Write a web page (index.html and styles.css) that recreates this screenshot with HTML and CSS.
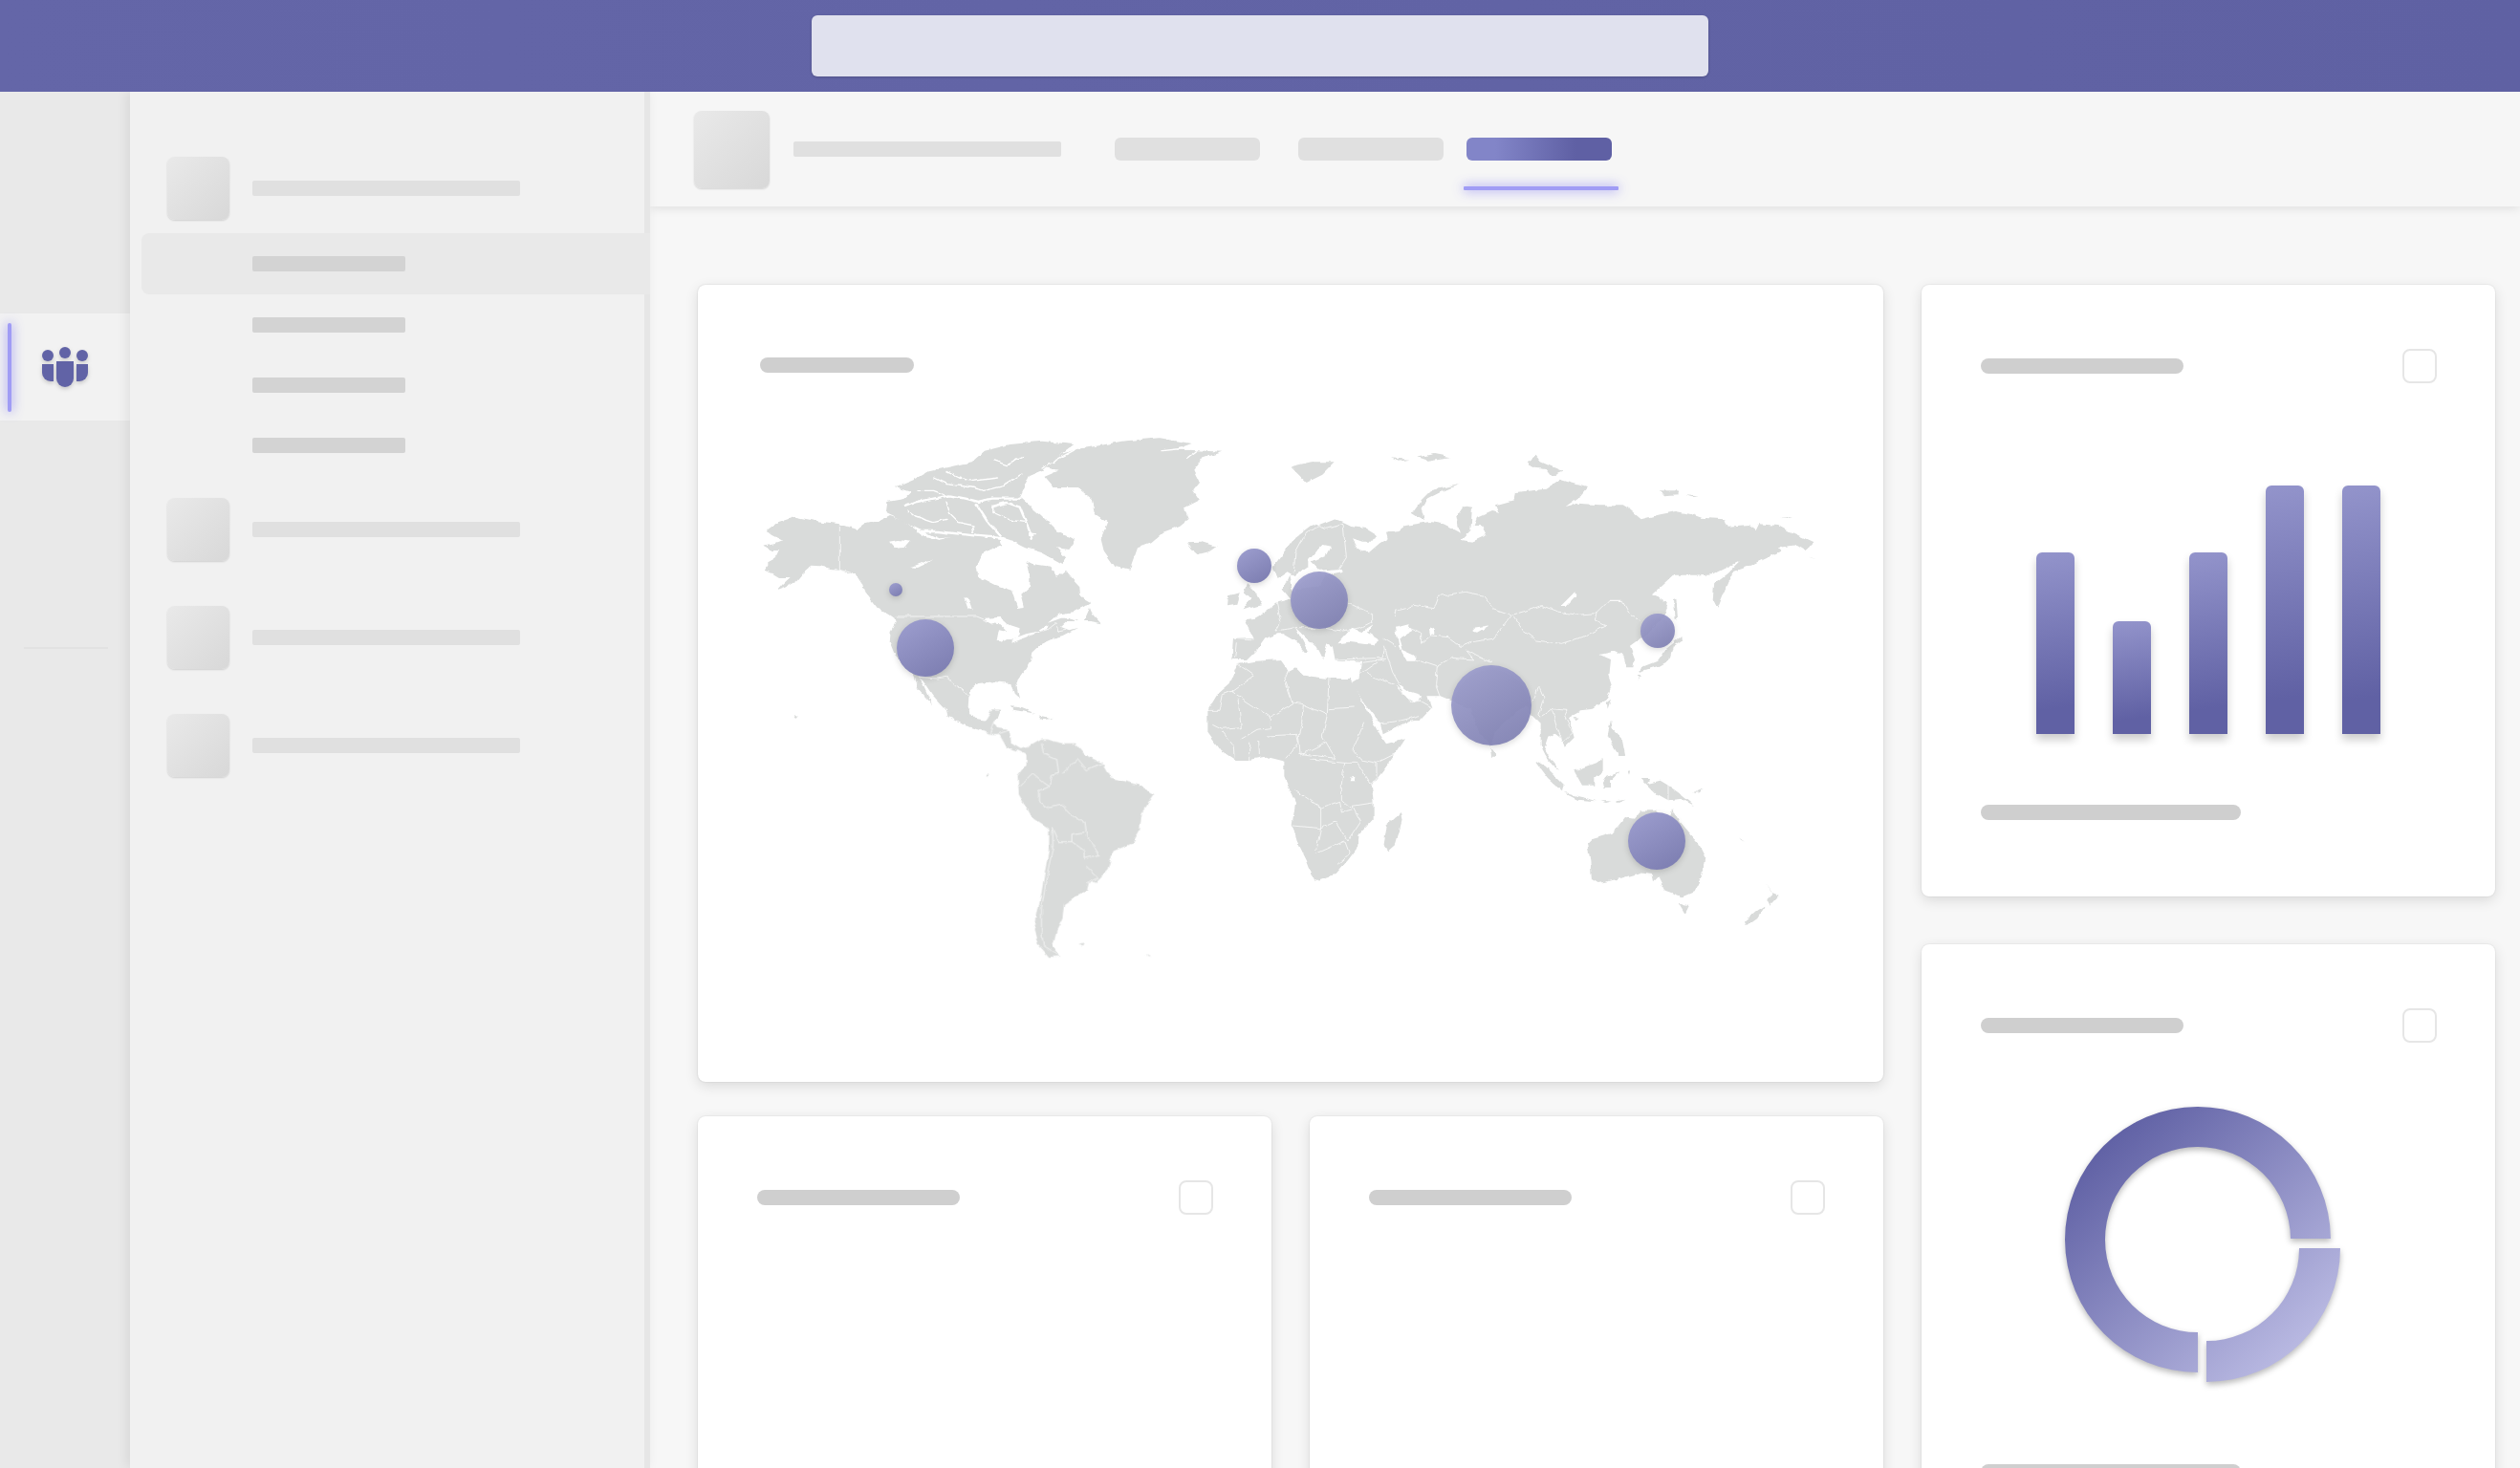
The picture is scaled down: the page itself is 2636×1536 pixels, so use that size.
FILE: index.html
```html
<!DOCTYPE html>
<html lang="en">
<head>
<meta charset="utf-8">
<title>Dashboard</title>
<link rel="stylesheet" href="styles.css">
</head>
<body>
<header class="topbar"><div class="search"></div></header>
<div class="shell">
  <nav class="rail">
    <div class="rail-item">
      <span class="rail-mark"></span>
      <svg class="rail-icon" viewBox="44 360 48 48" width="48" height="48">
        <circle cx="50" cy="372" r="6"/><circle cx="68" cy="369" r="6"/><circle cx="86" cy="372" r="6"/>
        <path d="M59 378H77V396A9 9 0 0 1 59 396Z"/>
        <path d="M44 381H56V399H53A9 9 0 0 1 44 390Z"/>
        <path d="M80 381H92V390A9 9 0 0 1 83 399H80Z"/>
      </svg>
    </div>
    <div class="rail-sep"></div>
  </nav>
  <aside class="side">
    <div class="group"><span class="tile"></span><span class="label"></span></div>
    <div class="child child-on"><span class="sub"></span></div>
    <div class="child"><span class="sub"></span></div>
    <div class="child"><span class="sub"></span></div>
    <div class="child"><span class="sub"></span></div>
    <div class="group group-gap"><span class="tile"></span><span class="label"></span></div>
    <div class="group group-gap2"><span class="tile"></span><span class="label"></span></div>
    <div class="group group-gap2"><span class="tile"></span><span class="label"></span></div>
  </aside>
  <main class="main">
    <div class="tabsbar">
      <span class="tabs-tile"></span>
      <span class="tabs-title"></span>
      <div class="tabs">
        <span class="tab"></span>
        <span class="tab"></span>
        <span class="tab tab-on"><i class="tab-line"></i></span>
      </div>
    </div>
    <div class="board">
      <div class="col-left">
        <section class="card card-map">
          <div class="bar-title map-title"></div>
          <svg class="map" viewBox="790 450 1130 560" width="1130" height="560">
            <defs>
              <linearGradient id="blob" x1="0.2" y1="0" x2="0.8" y2="1">
                <stop offset="0" stop-color="#9b9ccd"/>
                <stop offset="1" stop-color="#7d7eb1"/>
              </linearGradient>
              <filter id="rough" x="-2%" y="-2%" width="104%" height="104%">
                <feTurbulence type="fractalNoise" baseFrequency="0.09" numOctaves="3" seed="7" result="n"/>
                <feDisplacementMap in="SourceGraphic" in2="n" scale="5" xChannelSelector="R" yChannelSelector="G"/>
              </filter>
            </defs>
            <g class="rough">
            <!-- North America & arctic, traced at 3x from origin 790,450 -->
            <g transform="translate(790 450) scale(.33333)">
              <path class="land" d="M265 295 320 312 345 295 390 285 420 270 465 285 500 310 525 330 575 345 640 330 690 335 715 335 770 345 775 360 715 385 695 430 700 460 750 485 805 505 822 558 845 555 835 515 862 490 862 465 850 410 870 420 925 428 945 465 975 440 995 465 1018 490 1020 520 1055 540 1030 555 1000 570 950 578 918 605 960 590 985 590 1012 600 980 600 960 618 985 628 1012 620 965 645 930 655 900 668 868 698 865 720 848 750 820 790 822 815 828 842 815 830 805 795 750 790 700 795 672 815 668 870 690 905 725 912 760 905 768 882 745 880 745 945 720 945 650 925 605 900 600 880 555 830 525 785 515 780 530 805 555 862 510 810 495 772 470 740 440 710 422 665 425 630 440 605 437 590 420 578 385 560 365 535 345 510 335 480 315 450 290 450 265 440 235 438 200 430 175 428 150 450 130 475 95 495 68 505 85 485 110 462 75 462 55 450 28 440 40 425 40 412 70 395 78 378 50 378 22 362 60 355 85 345 55 330 35 315 70 290 125 272 190 285z"/>
              <path class="land" d="M440 180 500 155 545 130 600 118 680 100 720 65 800 45 900 35 1000 45 960 75 905 125 860 145 840 190 830 210 900 270 950 320 1005 345 985 375 945 370 975 400 965 420 900 385 850 370 800 345 770 335 640 335 575 340 510 310 410 262 415 225 470 215 490 195z"/>
              <path class="land" d="M1010 60 1070 50 1150 35 1270 25 1370 42 1320 60 1465 68 1400 90 1375 125 1395 165 1375 190 1395 220 1345 245 1360 280 1335 300 1280 320 1240 355 1200 370 1175 440 1130 430 1095 380 1085 340 1105 290 1065 265 1055 215 1010 180 935 180 905 145 950 125 910 118 960 75z"/>
              <path class="land" d="M1355 352 1400 350 1448 365 1420 385 1390 392 1370 375z"/>
              <path class="land" d="M1050 555 1060 580 1085 607 1050 600 1030 600z"/>
              <path class="land" d="M800 868 830 870 880 890 850 885 810 878z"/>
              <path class="land" d="M890 895 935 905 900 910z"/>
              <circle class="land" cx="130" cy="898" r="4"/>
              <path class="water" d="M420 350 450 345 485 350 470 368 440 372z"/>
              <path class="water" d="M490 430 555 405 530 422 510 432z"/>
              <path class="water" d="M655 525 668 528 680 565 668 562z"/>
              <path class="water" d="M720 590 770 588 800 615 830 625 825 650 800 658 770 668 758 660 765 625 790 630 770 610 735 605z"/>
              <path class="water" d="M805 668 850 650 880 635 915 625 920 610 885 632 850 640 810 655z"/>
              <path class="water" d="M855 320 880 325 870 335 855 332z"/>
              <path class="water" d="M1065 290 1105 285 1095 300 1070 298z"/>
              <path class="channel" d="M470 240 510 225 560 215 610 205 660 215 700 225 740 215 830 215"/>
              <path class="channel channel-thin" d="M480 255 500 270 560 290 600 280"/>
              <path class="channel" d="M510 318 570 318 640 326 690 332 760 338"/>
              <path class="channel channel-thin" d="M600 225 610 260 640 290 690 300 680 322"/>
              <path class="channel" d="M695 235 730 290 770 332"/>
              <path class="channel" d="M745 258 745 240 790 228 830 242 850 290 870 340"/>
              <path class="channel channel-thin" d="M745 258 800 282 850 290"/>
              <path class="channel channel-thin" d="M560 150 600 170 680 180 720 190 780 175 840 135"/>
              <path class="channel channel-thin" d="M745 95 790 110 840 85"/>
              <path class="channel channel-thin" d="M600 130 640 150 680 160 760 150"/>
              <path class="channel channel-thin" d="M510 190 560 190 600 205"/>
              <path class="channel channel-thin" d="M1275 65 1320 60 1360 60M1355 88 1385 65"/>
              <path class="channel channel-thin" d="M900 120 960 85 1010 58"/>
              <path class="line" d="M265 295V440L310 450 345 505M440 585H695L720 595 745 610M805 660 850 650 880 635 920 625 945 605 950 630 975 625M510 775 570 780 600 775 625 800 650 815 668 835"/>
            </g>
            <!-- Central & South America, traced at 2.529x from origin 700,420 -->
            <g transform="translate(700 420) scale(.3954)">
              <path class="land" d="M985 895 1000 895 1040 905 1075 905 1100 935 1150 960 1170 995 1240 1015 1283 1040 1250 1090 1245 1135 1225 1170 1175 1190 1160 1240 1130 1270 1110 1275 1105 1295 1075 1310 1045 1330 1040 1370 1025 1400 1015 1440 1035 1468 1005 1470 975 1435 965 1400 985 1300 1005 1180 1005 1130 960 1100 925 1040 922 990 945 960 945 935 925 925 890 915 870 880 850 880 800 860 735 830 790 810 795 840 835 845 850 820 875 818 860 850 870 865 900 870 905 905 930 920 950 915z"/>
              <path class="land" d="M1080 1435 1100 1433 1095 1440z"/>
              <path class="land" d="M1262 1462 1272 1468 1266 1468z"/>
              <circle class="land" cx="842" cy="990" r="3"/>
              <path class="line line-thin" d="M985 905 990 930 1025 945 1030 985 1010 990 1005 1020 980 1030 980 1060 1005 1075M1040 985 1060 965 1080 945 1105 975 1150 960M925 1020 960 985 990 1010 1005 1020M1005 1075 1040 1068 1070 1100 1100 1115 1105 1155 1130 1185 1135 1200 1100 1210M1015 1130 1030 1165 1065 1165 1100 1190 1100 1210M1015 1130 1015 1180 1000 1250 985 1340 985 1400 990 1440 1030 1465M1065 1165 1065 1145 1100 1140M1105 1232 1135 1260 1105 1275M850 880 860 850M870 880 900 870"/>
            </g>
            <!-- Eurasia & Africa, traced at 3x from origin 1240,460 -->
            <g transform="translate(1240 460) scale(.33333)">
              <path class="land" d="M420 270 470 250 500 260 520 270 560 275 600 300 590 320 555 320 525 310 545 345 575 355 610 325 635 310 630 290 670 285 690 270 770 258 810 265 860 290 850 240 870 210 900 215 895 285 865 315 900 320 945 300 930 270 905 270 915 245 960 225 985 230 975 205 1030 190 1035 165 1130 155 1175 125 1260 150 1240 175 1190 210 1230 200 1300 205 1370 205 1395 220 1430 250 1490 235 1540 225 1590 235 1620 245 1690 250 1700 275 1770 270 1790 285 1800 265 1860 270 1905 295 1970 325 1945 345 1920 330 1860 340 1870 350 1775 395 1720 415 1705 445 1670 530 1655 500 1660 450 1700 420 1740 380 1660 420 1600 425 1530 425 1465 485 1505 510 1515 525 1500 560 1460 600 1430 625 1395 650 1410 690 1405 715 1385 715 1375 680 1345 665 1300 675 1335 690 1330 740 1340 770 1320 820 1280 845 1240 850 1220 860 1205 880 1220 935 1190 965 1180 935 1160 920 1135 935 1125 965 1145 1000 1170 1035 1150 1020 1130 990 1115 960 1115 890 1085 860 1070 835 1030 860 970 920 960 960 920 920 895 845 860 830 800 805 760 805 772 840 735 880 700 885 620 925 612 890 565 830 520 765 545 750 552 695 470 692 462 650 445 640 430 690 410 650 380 625 345 590 385 665 375 670 340 630 305 610 290 610 250 625 225 660 195 690 145 690 150 625 215 625 185 565 215 560 250 540 290 510 330 500 305 470 325 425 335 470 345 480 345 430 320 415 290 435 275 400 340 310 400 265z"/>
              <path class="land" d="M165 705 220 695 300 690 325 725 345 715 370 740 450 750 520 750 530 775 570 850 610 925 630 955 690 940 660 985 620 1040 585 1085 590 1140 590 1190 545 1240 540 1280 510 1320 470 1365 405 1385 380 1320 350 1260 335 1210 345 1140 310 1060 310 1010 250 995 200 1005 155 1005 110 975 70 920 70 850 100 800 140 765z"/>
              <path class="land" d="M675 1170 680 1195 660 1270 635 1292 620 1270 630 1210z"/>
              <path class="land" d="M195 450 215 470 240 520 180 535 205 500 185 480z"/>
              <path class="land" d="M135 490 170 480 160 515 132 520z"/>
              <path class="land" d="M330 85 395 70 470 70 430 110 380 135 350 105z"/>
              <path class="land" d="M645 58 700 62 670 68zM730 55 780 45 830 55 760 65z"/>
              <path class="land" d="M710 230 740 190 770 160 860 140 800 165 760 185 740 215 750 250 725 240z"/>
              <path class="land" d="M1070 70 1100 50 1115 70 1185 100 1150 115 1130 90 1085 85z"/>
              <path class="land" d="M1485 160 1550 160 1550 175 1500 178zM1570 172 1610 175 1590 178z"/>
              <path class="land" d="M1870 242 1905 240 1885 246zM1955 365 1985 372 1965 368z"/>
              <path class="land" d="M1530 505 1540 500 1545 560 1535 565z"/>
              <path class="land" d="M1530 640 1558 615 1560 630 1530 650 1520 690 1485 710 1420 730 1430 715 1480 695 1505 660z"/>
              <path class="land" d="M1415 735 1425 735 1420 752z"/>
              <path class="land" d="M1335 815 1325 845 1322 825z"/>
              <path class="land" d="M1220 870 1235 872 1225 880z"/>
              <path class="land" d="M1335 880 1340 910 1370 940 1380 990 1360 990 1340 960 1325 925z"/>
              <path class="land" d="M960 965 975 985 975 995 963 995z"/>
              <path class="land" d="M1095 1005 1130 1025 1190 1085 1185 1105 1140 1065z"/>
              <path class="land" d="M1190 1110 1260 1125 1290 1135 1230 1130z"/>
              <path class="land" d="M1300 1135 1340 1135 1320 1140zM1350 1135 1385 1130 1360 1140z"/>
              <path class="land" d="M1220 1040 1290 1015 1310 1000 1310 1040 1285 1060 1285 1085 1245 1085z"/>
              <path class="land" d="M1320 1060 1360 1045 1335 1070 1335 1095 1315 1095 1310 1075z"/>
              <path class="land" d="M1390 1040 1398 1045 1395 1055z"/>
              <path class="land" d="M1430 1065 1455 1065 1450 1080 1490 1070 1515 1085 1550 1110 1600 1150 1560 1130 1515 1135 1480 1115 1455 1090z"/>
              <path class="land" d="M1590 1110 1625 1095 1610 1108z"/>
              <path class="water" d="M430 330 455 335 440 365 395 385 420 410 490 405 490 415 440 425 420 460 340 470 335 435 385 400 385 380z"/>
              <path class="water" d="M475 640 520 590 550 605 590 580 570 605 610 630 590 645 515 635z"/>
              <path class="water" d="M660 590 700 580 715 600 670 625 680 660 725 680 720 695 695 695 670 650z"/>
              <path class="water" d="M665 765 700 790 735 800 745 810 720 825 695 810z"/>
              <path class="water" d="M765 595 778 590 782 610 768 612z"/>
              <path class="water" d="M905 590 955 583 915 605 905 602z"/>
              <path class="water" d="M1175 525 1225 475 1228 490 1195 525z"/>
              <path class="water" d="M518 1058 532 1055 530 1072 515 1072z"/>
              <path class="line" d="M655 555 660 535 720 520 780 530 795 490 880 478 935 490 965 530 1025 550 995 590 965 625 900 635 865 650 825 620 770 615 740 640 740 605 700 590M1025 550 1060 540 1120 520 1170 540 1230 550 1290 545 1330 505 1370 505 1395 550 1430 570M1030 555 1060 600 1100 630 1180 640 1245 620 1320 585 1285 570 1290 545M510 510 590 550 590 570 550 590M620 625 660 650M625 650 650 730 670 765M790 710 785 770 800 810M700 680 790 710 835 685 905 690 880 660 915 680 960 700M545 740 615 690 625 660M570 730 590 745 660 770 710 825 735 820 770 840M610 890 660 885 700 875 735 865M470 690 630 685M555 700 625 690M1085 830 1110 775 1125 810 1110 860 1115 870 1150 845 1200 850 1190 870 1215 920 1185 950M1150 845 1165 900 1180 935M1330 505 1370 505M285 510 300 570 285 600 345 590 420 590 490 600 550 590M160 640 155 685M150 625 215 630M340 415 345 355 380 290 420 272 440 280 495 265 505 370 480 410M1515 1080V1135"/>
              <path class="line" d="M145 790 215 740 165 705M145 790 115 800 105 850 70 850M145 790 265 870 335 830 310 760 325 725M165 815 175 905 115 910 85 895M315 760 335 825 370 830 445 865 450 750M450 845 530 840M445 865 430 930 470 1000M370 830 365 890 355 925 360 985M265 870 265 905 225 910 175 940M255 930 350 925 355 950 315 1000M115 915 150 960 155 1005M200 950 200 1005M230 945 232 990M560 890 525 975 550 1005 600 1015 660 985M600 1015 600 1060 585 1085M390 1005 500 1015 490 1080 490 1130 525 1160 490 1170 485 1135 425 1155 345 1100M338 1212 425 1220 410 1290M425 1155 425 1220 470 1200 510 1260M410 1300 500 1260 515 1300 480 1330M590 1140 525 1150 550 1200 510 1260M355 985 470 1000M360 990 440 950M500 1015 540 1015 585 1085"/>
            </g>
            <!-- Iceland sits on the Eurasia crop's left edge, Oceania at 3x from origin 1620,760 -->
            <g transform="translate(1620 760) scale(.33333)">
              <path class="land" d="M120 370 135 355 200 335 240 285 270 290 290 265 340 265 340 300 380 300 390 258 410 300 470 370 490 410 480 470 455 520 420 535 365 515 345 475 330 490 325 465 285 460 215 480 155 492 135 480 130 420z"/>
              <path class="land" d="M410 558 442 560 428 588z"/>
              <path class="land" d="M680 495 695 520 722 530 695 560 685 540 700 525z"/>
              <path class="land" d="M680 560 655 600 620 625 615 610 650 580z"/>
              <path class="land" d="M598 350 615 362 603 356z"/>
            </g>
            </g>
            <circle class="blob" cx="937" cy="617" r="7"/>
            <circle class="blob" cx="968" cy="678" r="30"/>
            <circle class="blob" cx="1312" cy="592" r="18"/>
            <circle class="blob blob-see" cx="1380" cy="628" r="30"/>
            <circle class="blob blob-see" cx="1560" cy="738" r="42"/>
            <circle class="blob blob-see" cx="1734" cy="660" r="18"/>
            <circle class="blob" cx="1733" cy="880" r="30"/>
          </svg>
        </section>
        <div class="pair">
          <section class="card">
            <div class="card-head"><span class="bar-title"></span><span class="check"></span></div>
          </section>
          <section class="card">
            <div class="card-head"><span class="bar-title"></span><span class="check"></span></div>
          </section>
        </div>
      </div>
      <div class="col-right">
        <section class="card card-bars">
          <div class="card-head"><span class="bar-title"></span><span class="check"></span></div>
          <div class="bars">
            <span class="col-bar" style="height:190px"></span>
            <span class="col-bar" style="height:118px"></span>
            <span class="col-bar" style="height:190px"></span>
            <span class="col-bar" style="height:260px"></span>
            <span class="col-bar" style="height:260px"></span>
          </div>
          <div class="bar-foot"></div>
        </section>
        <section class="card card-donut">
          <div class="card-head"><span class="bar-title"></span><span class="check"></span></div>
          <svg class="donut" viewBox="2150 1150 310 310" width="310" height="310">
            <defs>
              <linearGradient id="ring" gradientUnits="userSpaceOnUse" x1="2195" y1="1195" x2="2410" y2="1420">
                <stop offset="0" stop-color="#5f60a4"/>
                <stop offset="1" stop-color="#bcbce4"/>
              </linearGradient>
            </defs>
            <path class="ring" d="M2438 1296A139 139 0 1 0 2299 1436V1394A97 97 0 1 1 2396 1296Z"/>
            <path class="ring" d="M2448 1306A140 140 0 0 1 2308 1446V1403A97 97 0 0 0 2405 1306Z"/>
          </svg>
          <div class="bar-foot bar-foot-donut"></div>
        </section>
      </div>
    </div>
  </main>
</div>
</body>
</html>
```
FILE: styles.css
```css
* { box-sizing: border-box; }
html, body { margin: 0; height: 100%; overflow: hidden; }
body { width: 2636px; height: 1536px; background: #f7f7f7; font-family: "Liberation Sans", sans-serif; display: flex; flex-direction: column; }

.topbar { height: 96px; flex: none; background: linear-gradient(90deg, #6466a8, #5f61a3); display: flex; justify-content: center; padding-top: 16px; position: relative; z-index: 5; }
.search { width: 938px; height: 64px; background: #e0e1ee; border-radius: 6px; box-shadow: 0 1px 3px rgba(0,0,0,.2); }

.shell { flex: 1; display: flex; min-height: 0; overflow: hidden; }

.rail { width: 136px; flex: none; background: #e9e9e9; padding-top: 232px; }
.rail-item { height: 112px; background: #f2f2f2; display: flex; align-items: center; justify-content: center; position: relative; }
.rail-mark { position: absolute; left: 8px; top: 10px; width: 4px; height: 93px; border-radius: 2px; background: #a09cf5; box-shadow: 0 0 12px rgba(90,80,240,.75); }
.rail-icon { display: block; fill: #6163a6; filter: drop-shadow(0 2px 2px rgba(0,0,0,.18)); }
.rail-sep { width: 88px; height: 2px; background: #e2e2e2; margin: 237px 0 0 25px; }

.side { width: 544px; flex: none; background: #f1f1f1; border-right: 6px solid #e6e6e6; padding-top: 68px; box-shadow: -3px 0 12px rgba(0,0,0,.08); position: relative; z-index: 1; }
.group { display: flex; align-items: center; gap: 24px; padding-left: 39px; }
.group-gap { margin-top: 24px; }
.group-gap2 { margin-top: 47px; }
.tile { width: 65px; height: 66px; border-radius: 8px; background: linear-gradient(135deg, #e9e9e9, #d8d8d8); box-shadow: 0 1px 2px rgba(0,0,0,.14); flex: none; }
.label { width: 280px; height: 16px; background: #e0e0e0; border-radius: 2px; }
.child { height: 63px; display: flex; align-items: center; padding-left: 128px; }
.child-on { height: 64px; margin: 14px -6px 0 12px; padding-left: 116px; background: #e9e9e9; border-radius: 8px 0 0 8px; }
.sub { width: 160px; height: 16px; background: #d3d3d3; border-radius: 2px; }

.main { flex: 1; min-width: 0; overflow: hidden; box-shadow: -2px 0 6px rgba(0,0,0,.05); }
.tabsbar { height: 120px; background: #f6f6f6; display: flex; align-items: center; padding-left: 46px; box-shadow: 0 2px 10px rgba(0,0,0,.1); position: relative; }
.tabs-tile { width: 79px; height: 81px; border-radius: 8px; background: linear-gradient(135deg, #e9e9e9, #d8d8d8); box-shadow: 0 1px 2px rgba(0,0,0,.14); }
.tabs-title { width: 280px; height: 16px; background: #e0e0e0; border-radius: 2px; margin-left: 25px; }
.tabs { display: flex; margin-left: 56px; }
.tab { width: 152px; height: 24px; background: #e0e0e0; border-radius: 6px; margin-right: 40px; position: relative; }
.tab + .tab + .tab { margin-left: -16px; }
.tab-on { background: linear-gradient(90deg, #8285c8 20%, #5f60a4 75%); }
.tab-line { position: absolute; left: -3px; top: 51px; width: 162px; height: 4px; background: #a09cf5; box-shadow: 0 0 12px rgba(90,80,240,.75); border-radius: 1px; }

.board { display: flex; gap: 40px; padding: 82px 0 0 50px; align-items: flex-start; }
.col-left { width: 1240px; flex: none; display: flex; flex-direction: column; gap: 36px; }
.col-right { width: 600px; flex: none; display: flex; flex-direction: column; gap: 50px; }

.card { background: #fff; border-radius: 8px; box-shadow: 0 4px 14px rgba(0,0,0,.12), 0 0 2px rgba(0,0,0,.14); padding-top: 67px; }
.card-map { height: 834px; padding: 76px 0 0 65px; }
.bar-title { display: block; width: 212px; height: 16px; background: #cfcfcf; border-radius: 8px; }
.map-title { width: 161px; }
.map { display: block; margin: 60px 0 0 -5px; }
.rough { filter: url(#rough); }
.land { fill: #d9dbda; }
.water { fill: #fff; }
.channel { fill: none; stroke: #fff; stroke-width: 7; stroke-linejoin: round; stroke-linecap: round; }
.channel-thin { stroke-width: 4; }
.line { fill: none; stroke: #fff; stroke-width: 2.4; stroke-linejoin: round; opacity: .9; }
.line-thin { stroke-width: 2; }
.blob { fill: url(#blob); filter: drop-shadow(0 2px 3px rgba(0,0,0,.16)); }
.blob-see { fill-opacity: .9; }

.pair { display: flex; gap: 40px; }
.pair .card { width: 600px; height: 500px; }

.card-head { display: flex; justify-content: space-between; align-items: center; height: 36px; margin: 0 61px 0 62px; }
.check { width: 36px; height: 36px; border: 2px solid #e6e6e6; border-radius: 8px; }

.card-bars { height: 640px; }
.bars { display: flex; align-items: flex-end; gap: 40px; height: 260px; margin: 107px 0 0 120px; }
.col-bar { width: 40px; background: linear-gradient(172deg, #9394cb, #6061a4 85%); border-radius: 6px 6px 0 0; box-shadow: 0 6px 10px rgba(0,0,0,.2); }
.bar-foot { width: 272px; height: 16px; background: #cfcfcf; border-radius: 8px; margin: 74px 0 0 62px; }

.card-donut { height: 640px; }
.donut { display: block; margin: 59px 0 0 140px; }
.ring { fill: url(#ring); filter: drop-shadow(0 3px 3px rgba(0,0,0,.28)); }
.bar-foot-donut { margin-top: 72px; }
```
